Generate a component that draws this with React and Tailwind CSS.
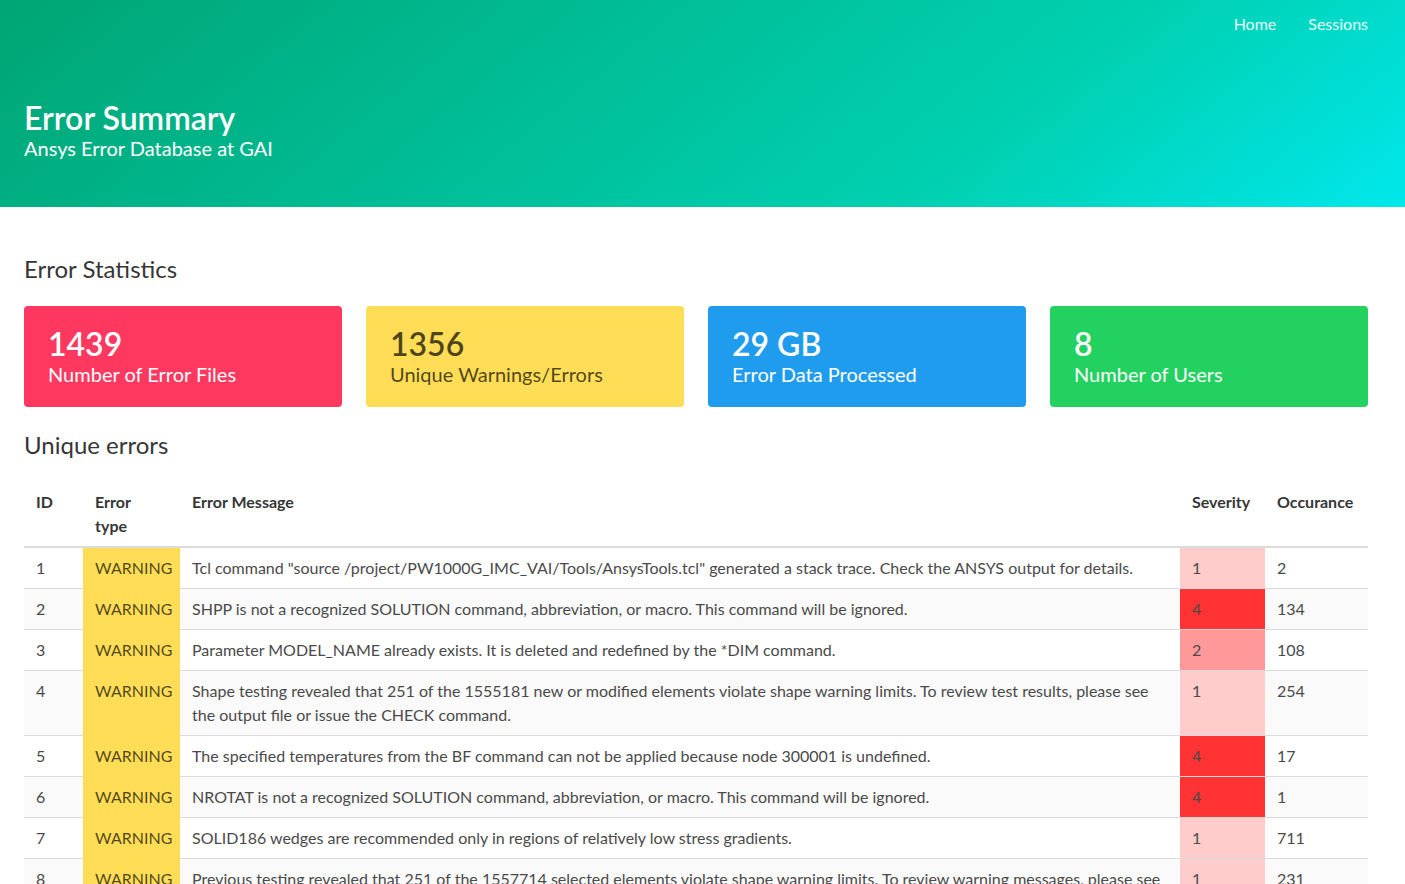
import React from 'react';

const STATS = [
  { value: '1439', label: 'Number of Error Files', cls: 'bg-[#ff3860] text-white' },
  { value: '1356', label: 'Unique Warnings/Errors', cls: 'bg-[#ffdd57] text-black/70' },
  { value: '29 GB', label: 'Error Data Processed', cls: 'bg-[#209cee] text-white' },
  { value: '8', label: 'Number of Users', cls: 'bg-[#23d160] text-white' },
];

const ERRORS = [
  { id: 1, type: 'WARNING', msg: 'Tcl command "source /project/PW1000G_IMC_VAI/Tools/AnsysTools.tcl" generated a stack trace. Check the ANSYS output for details.', sev: 1, count: 2 },
  { id: 2, type: 'WARNING', msg: 'SHPP is not a recognized SOLUTION command, abbreviation, or macro. This command will be ignored.', sev: 4, count: 134 },
  { id: 3, type: 'WARNING', msg: 'Parameter MODEL_NAME already exists. It is deleted and redefined by the *DIM command.', sev: 2, count: 108 },
  { id: 4, type: 'WARNING', msg: 'Shape testing revealed that 251 of the 1555181 new or modified elements violate shape warning limits. To review test results, please see the output file or issue the CHECK command.', sev: 1, count: 254 },
  { id: 5, type: 'WARNING', msg: 'The specified temperatures from the BF command can not be applied because node 300001 is undefined.', sev: 4, count: 17 },
  { id: 6, type: 'WARNING', msg: 'NROTAT is not a recognized SOLUTION command, abbreviation, or macro. This command will be ignored.', sev: 4, count: 1 },
  { id: 7, type: 'WARNING', msg: 'SOLID186 wedges are recommended only in regions of relatively low stress gradients.', sev: 1, count: 711 },
  { id: 8, type: 'WARNING', msg: 'Previous testing revealed that 251 of the 1557714 selected elements violate shape warning limits. To review warning messages, please see the output file or issue the CHECK command.', sev: 1, count: 231 },
];

// severity -> cell colour
const SEV_BG = { 1: 'bg-[#ffcccc]', 2: 'bg-[#ff9999]', 3: 'bg-[#ff6666]', 4: 'bg-[#ff3333]' };

export default function App() {
  return (
    <div className="min-h-screen bg-white text-[#4a4a4a] font-['Lato','Liberation_Sans',sans-serif]">
      {/* Hero */}
      <header className="h-[207px] bg-[linear-gradient(141deg,#00a574_0%,#00d1b2_71%,#00e7eb_100%)] pl-6 pr-[37px] text-white">
        <nav className="flex justify-end gap-8 pt-3 text-base leading-6 text-white/90">
          <a href="#">Home</a>
          <a href="#">Sessions</a>
        </nav>
        <h1 className="mt-[64px] text-[32px] font-semibold leading-[36px]">Error Summary</h1>
        <p className="text-[20px] leading-[25px]">Ansys Error Database at GAI</p>
      </header>

      <main className="pl-6 pr-[37px] pt-12 pb-12">
        <h2 className="mb-6 text-2xl leading-[27px] text-[#363636]">Error Statistics</h2>
        <div className="mb-6 grid grid-cols-4 gap-6">
          {STATS.map(s => (
            <div key={s.label} className={`h-[101px] rounded pl-6 pr-10 pt-5 ${s.cls}`}>
              <div className="text-[32px] font-semibold leading-[36px]">{s.value}</div>
              <div className="text-[20px] leading-[25px]">{s.label}</div>
            </div>
          ))}
        </div>

        <h2 className="mb-6 text-2xl leading-[27px] text-[#363636]">Unique errors</h2>
        <table className="w-full table-fixed border-collapse text-base leading-6">
          <colgroup>
            <col className="w-[59px]" />
            <col className="w-[97px]" />
            <col />
            <col className="w-[85px]" />
            <col className="w-[103px]" />
          </colgroup>
          <thead>
            <tr className="text-left align-top font-bold text-[#363636]">
              <th className="border-b-2 border-[#dbdbdb] px-3 py-2">ID</th>
              <th className="border-b-2 border-[#dbdbdb] px-3 py-2"><span className="block w-min">Error type</span></th>
              <th className="border-b-2 border-[#dbdbdb] px-3 py-2">Error Message</th>
              <th className="border-b-2 border-[#dbdbdb] px-3 py-2">Severity</th>
              <th className="border-b-2 border-[#dbdbdb] px-3 py-2">Occurance</th>
            </tr>
          </thead>
          <tbody>
            {ERRORS.map((e, i) => (
              <tr key={e.id} className={`align-top ${i % 2 === 1 ? 'bg-[#fafafa]' : 'bg-white'}`}>
                <td className="border-b border-[#dbdbdb] px-3 py-2">{e.id}</td>
                <td className="border-b border-[#ffdd57] bg-[#ffdd57] px-3 py-2 text-black/70">{e.type}</td>
                <td className="border-b border-[#dbdbdb] px-3 py-2">{e.msg}</td>
                <td className={`border-b border-[#dbdbdb] px-3 py-2 ${SEV_BG[e.sev]}`}>{e.sev}</td>
                <td className="border-b border-[#dbdbdb] px-3 py-2">{e.count}</td>
              </tr>
            ))}
          </tbody>
        </table>
      </main>
    </div>
  );
}
